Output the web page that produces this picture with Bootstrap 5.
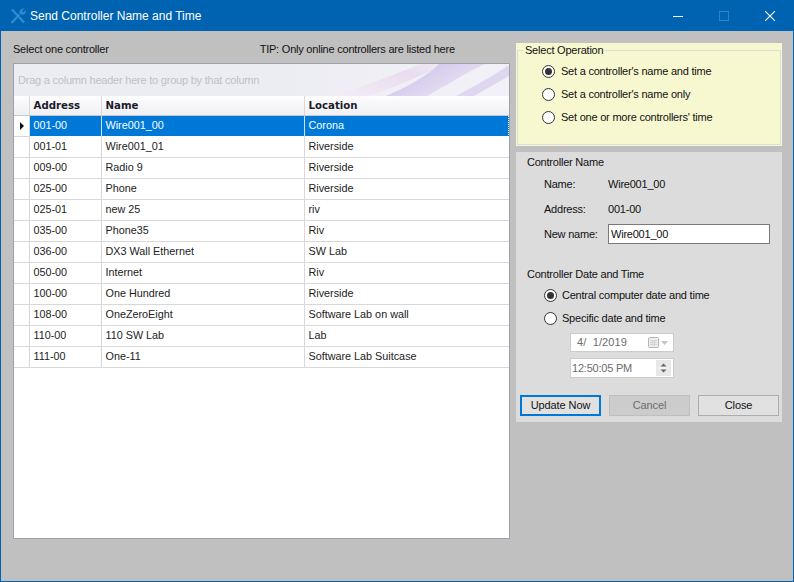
<!DOCTYPE html>
<html lang="en">
<head>
    <meta charset="UTF-8">
    <meta name="viewport" content="width=device-width, initial-scale=1.0">
    <title>Send Controller Name and Time</title>
    <link href="https://cdn.jsdelivr.net/npm/bootstrap@5.3.0/dist/css/bootstrap.min.css" rel="stylesheet">
    <style>
        html, body { height: 100%; }
        body {
            background-color: #c0c0c0;
            font-family: "Liberation Sans", Arial, sans-serif;
            font-size: 11px;
            letter-spacing: -0.22px;
            line-height: 13px;
            color: #111;
            overflow: hidden;
        }
        .win-frame {
            width: 794px;
            height: 582px;
            border: solid #0063b1;
            border-width: 0 1px 1px 1px;
        }
        .win-title {
            height: 31px;
            margin: 0 -1px;
            background-color: #0063b1;
            color: #fff;
            font-size: 12px;
            letter-spacing: 0;
            padding-left: 9px;
        }
        .win-title svg { margin-right: 3px; }
        .win-caption { padding-top: 1px; }
        .win-btn { width: 46px; height: 31px; }
        .win-body { padding: 12px 11px 0 12px; gap: 6px; }
        .left-col { width: 497px; }
        .right-col { width: 266px; }
        .left-labels { height: 20px; }
        .left-labels .tip { margin-left: 151px; }
        .ctl-grid {
            height: 476px;
            background-color: #fff;
            border: 1px solid #a0a0ac;
        }
        .group-panel {
            height: 32px;
            background: linear-gradient(90deg, #ecedf2 50%, #f2f1f7);
            color: #c0c0c4;
            padding-left: 4px;
            font-size: 11px;
        }
        .group-panel svg { right: 0; top: 0; }
        .ctl-table { table-layout: fixed; width: 495px; border-collapse: collapse; }
        .ctl-table td, .ctl-table th {
            padding: 0 3px 0 4px;
            height: 21px;
            border-right: 1px solid #d8d8dc;
            border-bottom: 1px solid #d8d8dc;
            white-space: nowrap;
            font-size: 10.8px;
            letter-spacing: 0;
            color: #222;
            font-weight: 400;
        }
        .ctl-table th {
            height: 19px;
            background: linear-gradient(#fdfdfe, #eff0f3);
            font-family: "DejaVu Sans", sans-serif;
            font-size: 10.2px;
            font-weight: 700;
            color: #1b1b2a;
            border-bottom: 1px solid #c8c8d0;
        }
        .ctl-table tr.row-sel td {
            background-color: #0078d7;
            color: #fff;
            border-top: 1px dotted #fff;
            border-bottom: 1px dotted #fff;
            border-right: 1px solid #cfe3f5;
        }
        .ctl-table tr.row-sel td:first-child { background-color: #fff; border-top: 0; border-bottom: 1px solid #d8d8dc; border-right-color: #d8d8dc; }
        .ctl-table tr.row-sel td:last-child { border-right: 1px dotted #fff; }
        .ctl-table td:last-child, .ctl-table th:last-child { border-right: 0; }
        .row-arrow { width: 0; height: 0; border: 4px solid transparent; border-left: 4px solid #111; border-right: 0; display: block; margin-left: 2px; }

        .op-panel {
            height: 103px;
            background-color: #f8f8d0;
            padding: 7px 1px 1px 1px;
        }
        .op-box { height: 100%; border: 1px solid #dcdcdc; }
        .op-legend { margin: -7px 0 0 5px; padding: 0 2px; background-color: #f8f8d0; height: 13px; align-self: flex-start; }
        .op-radios { padding: 8px 0 0 24px; gap: 10px; }
        .radio-row { height: 13px; gap: 6px; }
        .radio-dot {
            width: 13px; height: 13px;
            border: 1px solid #333;
            border-radius: 50%;
            background-color: #fff;
            flex: none;
            position: relative;
        }
        .radio-dot.on::after {
            content: "";
            position: absolute;
            left: 2px; top: 2px;
            width: 7px; height: 7px;
            border-radius: 50%;
            background-color: #333;
        }

        .info-panel {
            height: 270px;
            margin-top: 6px;
            background-color: #dcdcdc;
            padding: 4px 4px 0 4px;
        }
        .sect-title { padding-left: 7px; height: 13px; }
        .info-row { padding-left: 24px; height: 13px; }
        .info-row.has-input { height: 20px; margin-top: 8px; }
        .gap-name { margin-top: 9px; }
        .gap-addr { margin-top: 12px; }
        .gap-date { margin-top: 24px; }
        .date-radios { margin-top: 8px; padding-left: 24px; gap: 10px; }
        .date-radios .radio-row { gap: 5px; }
        .info-key { width: 64px; }
        .name-input {
            width: 162px;
            height: 20px;
            border: 1px solid #7a7a7a;
            background-color: #fff;
            padding: 0 2px;
            font-size: 11px;
            letter-spacing: -0.22px;
            color: #111;
            border-radius: 0;
            outline: none;
        }
        .spec-box {
            width: 104px;
            margin-left: 50px;
            background-color: #fff;
            border: 1px solid #ccc;
            color: #6d6d6d;
        }
        .date-box { height: 19px; margin-top: 8px; padding-left: 6px; letter-spacing: 0.1px; }
        .time-box { height: 20px; margin-top: 6px; padding-left: 1px; }
        .spin-box { width: 15px; height: 16px; background-color: #e8e8e8; margin-right: 2px; }
        .act-row { margin-top: 17px; gap: 8px; }
        .act-btn {
            flex: none;
            width: 81px;
            height: 21px;
            padding: 0;
            border-radius: 0;
            border: 1px solid #adadad;
            background-color: #e1e1e1;
            color: #111;
            font-size: 11px;
            letter-spacing: -0.1px;
            line-height: 1;
        }
        .act-btn.is-default { border: 2px solid #0078d7; }
        .act-btn.is-off { background-color: #cccccc; color: #6d6d6d; border-color: #bfbfbf; }
        .act-btn.is-off:disabled { opacity: 1; }
    </style>
</head>
<body class="m-0">
    <div class="win-frame d-flex flex-column">
        <!-- title bar -->
        <div class="win-title d-flex align-items-center flex-shrink-0">
            <svg width="18" height="18" viewBox="0 0 18 18">
                <path d="M2.5 16 L10.5 7.5 M3 2.5 L15 15.5" stroke="#2c8ccf" stroke-width="2.4" fill="none"/>
                <path d="M10.5 6 A4 4 0 0 1 15.5 1.6 L13 4 L14.4 5.4 L17 3 A4 4 0 0 1 12 7.6 Z" fill="#2c8ccf"/>
            </svg>
            <span class="win-caption">Send Controller Name and Time</span>
            <div class="ms-auto d-flex">
                <div class="win-btn d-flex align-items-center justify-content-center">
                    <svg width="10" height="10" viewBox="0 0 10 10"><path d="M0 5.5H10" stroke="#fff"/></svg>
                </div>
                <div class="win-btn d-flex align-items-center justify-content-center">
                    <svg width="10" height="10" viewBox="0 0 10 10"><rect x="0.5" y="0.5" width="9" height="9" fill="none" stroke="#2f82c4"/></svg>
                </div>
                <div class="win-btn d-flex align-items-center justify-content-center">
                    <svg width="10" height="10" viewBox="0 0 10 10"><path d="M0 0L10 10M10 0L0 10" stroke="#fff" stroke-width="1.1"/></svg>
                </div>
            </div>
        </div>

        <div class="win-body d-flex flex-grow-1">
            <!-- left side -->
            <div class="left-col">
                <div class="left-labels d-flex">
                    <span>Select one controller</span>
                    <span class="tip">TIP: Only online controllers are listed here</span>
                </div>
                <div class="ctl-grid">
                    <div class="group-panel position-relative d-flex align-items-center overflow-hidden">
                        <svg class="position-absolute" width="240" height="32" viewBox="0 0 240 32">
                            <defs>
                                <linearGradient id="waveA" x1="0" y1="0" x2="1" y2="0.6">
                                    <stop offset="0" stop-color="#c9bbe9"/>
                                    <stop offset="1" stop-color="#e9e5f4"/>
                                </linearGradient>
                                <linearGradient id="waveB" x1="0" y1="1" x2="1" y2="0">
                                    <stop offset="0" stop-color="#f3edf6"/>
                                    <stop offset="0.7" stop-color="#e9dcf0"/>
                                    <stop offset="1" stop-color="#f2ebf6"/>
                                </linearGradient>
                            </defs>
                            <path d="M60 32 C95 24 125 10 152 0 H178 C150 12 125 24 100 32 Z" fill="url(#waveB)"/>
                            <path d="M117 32 C140 22 158 12 170 0 H216 C195 10 180 20 158 32 Z" fill="url(#waveA)"/>
                            <path d="M187 32 C205 22 225 12 238 2 H240 V12 L205 32 Z" fill="#dfd7f0"/>
                        </svg>
                        <span class="position-relative">Drag a column header here to group by that column</span>
                    </div>
                    <table class="ctl-table">
                        <colgroup><col style="width:15px"><col style="width:72px"><col style="width:203px"><col></colgroup>
                        <thead>
                            <tr><th></th><th>Address</th><th>Name</th><th>Location</th></tr>
                        </thead>
                        <tbody id="gridRows"></tbody>
                    </table>
                </div>
            </div>

            <!-- right side -->
            <div class="right-col">
                <div class="op-panel">
                    <div class="op-box d-flex flex-column">
                        <div class="op-legend">Select Operation</div>
                        <div class="op-radios d-flex flex-column">
                            <div class="radio-row d-flex align-items-center"><span class="radio-dot on"></span><span>Set a controller's name and time</span></div>
                            <div class="radio-row d-flex align-items-center"><span class="radio-dot"></span><span>Set a controller's name only</span></div>
                            <div class="radio-row d-flex align-items-center"><span class="radio-dot"></span><span>Set one or more controllers' time</span></div>
                        </div>
                    </div>
                </div>

                <div class="info-panel">
                    <div class="sect-title">Controller Name</div>
                    <div class="info-row d-flex gap-name"><span class="info-key">Name:</span><span>Wire001_00</span></div>
                    <div class="info-row d-flex gap-addr"><span class="info-key">Address:</span><span>001-00</span></div>
                    <div class="info-row has-input d-flex align-items-center"><span class="info-key">New name:</span><input class="name-input" value="Wire001_00"></div>

                    <div class="sect-title gap-date">Controller Date and Time</div>
                    <div class="date-radios d-flex flex-column">
                        <div class="radio-row d-flex align-items-center"><span class="radio-dot on"></span><span>Central computer date and time</span></div>
                        <div class="radio-row d-flex align-items-center"><span class="radio-dot"></span><span>Specific date and time</span></div>
                    </div>
                    <div class="spec-box date-box d-flex align-items-center justify-content-between">
                        <span>4/&nbsp;&nbsp;1/2019</span>
                        <svg class="me-1" width="22" height="11" viewBox="0 0 22 11">
                            <rect x="1.5" y="0.5" width="10" height="10" rx="1" fill="#eee" stroke="#b4b4b4"/>
                            <path d="M3 3.5H10M3 5.5H10M3 7.5H10M5 3V9M7.5 3V9" stroke="#ccc" stroke-width="0.7"/>
                            <path d="M14 4H21L17.5 8Z" fill="#c4c4c4"/>
                        </svg>
                    </div>
                    <div class="spec-box time-box d-flex align-items-center justify-content-between">
                        <span>12:50:05 PM</span>
                        <svg class="spin-box" viewBox="0 0 15 16">
                            <path d="M7.5 3.5L10.5 6.5H4.5Z" fill="#666"/>
                            <path d="M7.5 12.5L10.5 9.5H4.5Z" fill="#666"/>
                            <path d="M2 8H13" stroke="#fff"/>
                        </svg>
                    </div>
                    <div class="act-row d-flex">
                        <button type="button" class="btn act-btn is-default">Update Now</button>
                        <button type="button" class="btn act-btn is-off" disabled>Cancel</button>
                        <button type="button" class="btn act-btn">Close</button>
                    </div>
                </div>
            </div>
        </div>
    </div>

    <script>
        // grid rows
        var rows = [
            ['001-00', 'Wire001_00', 'Corona'],
            ['001-01', 'Wire001_01', 'Riverside'],
            ['009-00', 'Radio 9', 'Riverside'],
            ['025-00', 'Phone', 'Riverside'],
            ['025-01', 'new 25', 'riv'],
            ['035-00', 'Phone35', 'Riv'],
            ['036-00', 'DX3 Wall Ethernet', 'SW Lab'],
            ['050-00', 'Internet', 'Riv'],
            ['100-00', 'One Hundred', 'Riverside'],
            ['108-00', 'OneZeroEight', 'Software Lab on wall'],
            ['110-00', '110 SW Lab', 'Lab'],
            ['111-00', 'One-11', 'Software Lab Suitcase']
        ];
        document.getElementById('gridRows').innerHTML = rows.map(function (r, i) {
            return '<tr' + (i === 0 ? ' class="row-sel"' : '') + '><td>' + (i === 0 ? '<span class="row-arrow"></span>' : '') + '</td><td>' + r[0] + '</td><td>' + r[1] + '</td><td>' + r[2] + '</td></tr>';
        }).join('');
    </script>
    <script src="https://cdn.jsdelivr.net/npm/bootstrap@5.3.0/dist/js/bootstrap.bundle.min.js"></script>
</body>
</html>
